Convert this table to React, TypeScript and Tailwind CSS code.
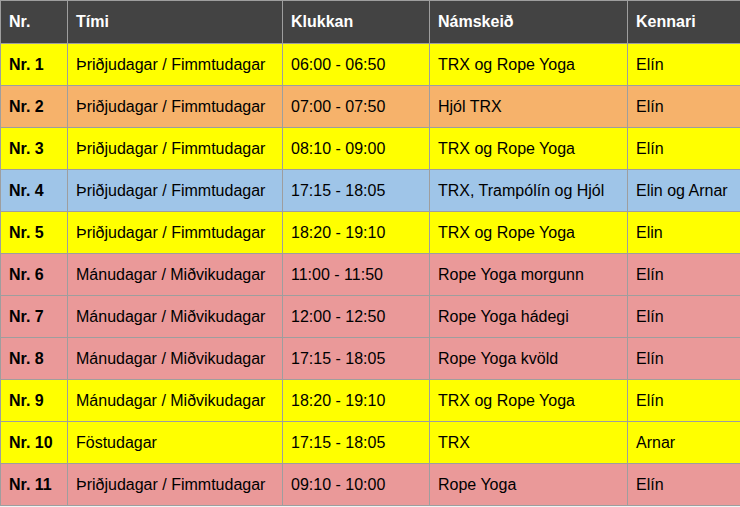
const rows = [
  { nr: 'Nr. 1', timi: 'Þriðjudagar / Fimmtudagar', klukkan: '06:00 - 06:50', namskeid: 'TRX og Rope Yoga', kennari: 'Elín', bg: 'bg-[#ffff00]' },
  { nr: 'Nr. 2', timi: 'Þriðjudagar / Fimmtudagar', klukkan: '07:00 - 07:50', namskeid: 'Hjól TRX', kennari: 'Elín', bg: 'bg-[#f6b26b]' },
  { nr: 'Nr. 3', timi: 'Þriðjudagar / Fimmtudagar', klukkan: '08:10 - 09:00', namskeid: 'TRX og Rope Yoga', kennari: 'Elín', bg: 'bg-[#ffff00]' },
  { nr: 'Nr. 4', timi: 'Þriðjudagar / Fimmtudagar', klukkan: '17:15 - 18:05', namskeid: 'TRX, Trampólín og Hjól', kennari: 'Elin og Arnar', bg: 'bg-[#9fc5e8]' },
  { nr: 'Nr. 5', timi: 'Þriðjudagar / Fimmtudagar', klukkan: '18:20 - 19:10', namskeid: 'TRX og Rope Yoga', kennari: 'Elin', bg: 'bg-[#ffff00]' },
  { nr: 'Nr. 6', timi: 'Mánudagar / Miðvikudagar', klukkan: '11:00 - 11:50', namskeid: 'Rope Yoga morgunn', kennari: 'Elín', bg: 'bg-[#ea9999]' },
  { nr: 'Nr. 7', timi: 'Mánudagar / Miðvikudagar', klukkan: '12:00 - 12:50', namskeid: 'Rope Yoga hádegi', kennari: 'Elín', bg: 'bg-[#ea9999]' },
  { nr: 'Nr. 8', timi: 'Mánudagar / Miðvikudagar', klukkan: '17:15 - 18:05', namskeid: 'Rope Yoga kvöld', kennari: 'Elín', bg: 'bg-[#ea9999]' },
  { nr: 'Nr. 9', timi: 'Mánudagar / Miðvikudagar', klukkan: '18:20 - 19:10', namskeid: 'TRX og Rope Yoga', kennari: 'Elín', bg: 'bg-[#ffff00]' },
  { nr: 'Nr. 10', timi: 'Föstudagar', klukkan: '17:15 - 18:05', namskeid: 'TRX', kennari: 'Arnar', bg: 'bg-[#ffff00]' },
  { nr: 'Nr. 11', timi: 'Þriðjudagar / Fimmtudagar', klukkan: '09:10 - 10:00', namskeid: 'Rope Yoga', kennari: 'Elín', bg: 'bg-[#ea9999]' },
];

const headers = ['Nr.', 'Tími', 'Klukkan', 'Námskeið', 'Kennari'];

export default function App() {
  return (
    <div className="w-[740px] h-[507px] bg-[#f3f3f3]" style={{ fontFamily: '"Liberation Sans", Arial, sans-serif' }}>
      <table className="w-[740px] table-fixed border-collapse text-[16px] text-black">
        <colgroup>
          <col className="w-[67px]" />
          <col className="w-[215px]" />
          <col className="w-[147px]" />
          <col className="w-[198px]" />
          <col className="w-[113px]" />
        </colgroup>
        <thead>
          <tr className="bg-[#434343] h-[43px]">
            {headers.map((h) => (
              <th key={h} className="border border-[#9e9e9e] px-2 text-left font-bold text-white">
                {h}
              </th>
            ))}
          </tr>
        </thead>
        <tbody>
          {rows.map((r) => (
            <tr key={r.nr} className={`${r.bg} h-[42px]`}>
              <td className="border border-[#9e9e9e] px-2 font-bold">{r.nr}</td>
              <td className="border border-[#9e9e9e] px-2">{r.timi}</td>
              <td className="border border-[#9e9e9e] px-2">{r.klukkan}</td>
              <td className="border border-[#9e9e9e] px-2">{r.namskeid}</td>
              <td className="border border-[#9e9e9e] px-2 whitespace-nowrap">{r.kennari}</td>
            </tr>
          ))}
        </tbody>
      </table>
    </div>
  );
}
